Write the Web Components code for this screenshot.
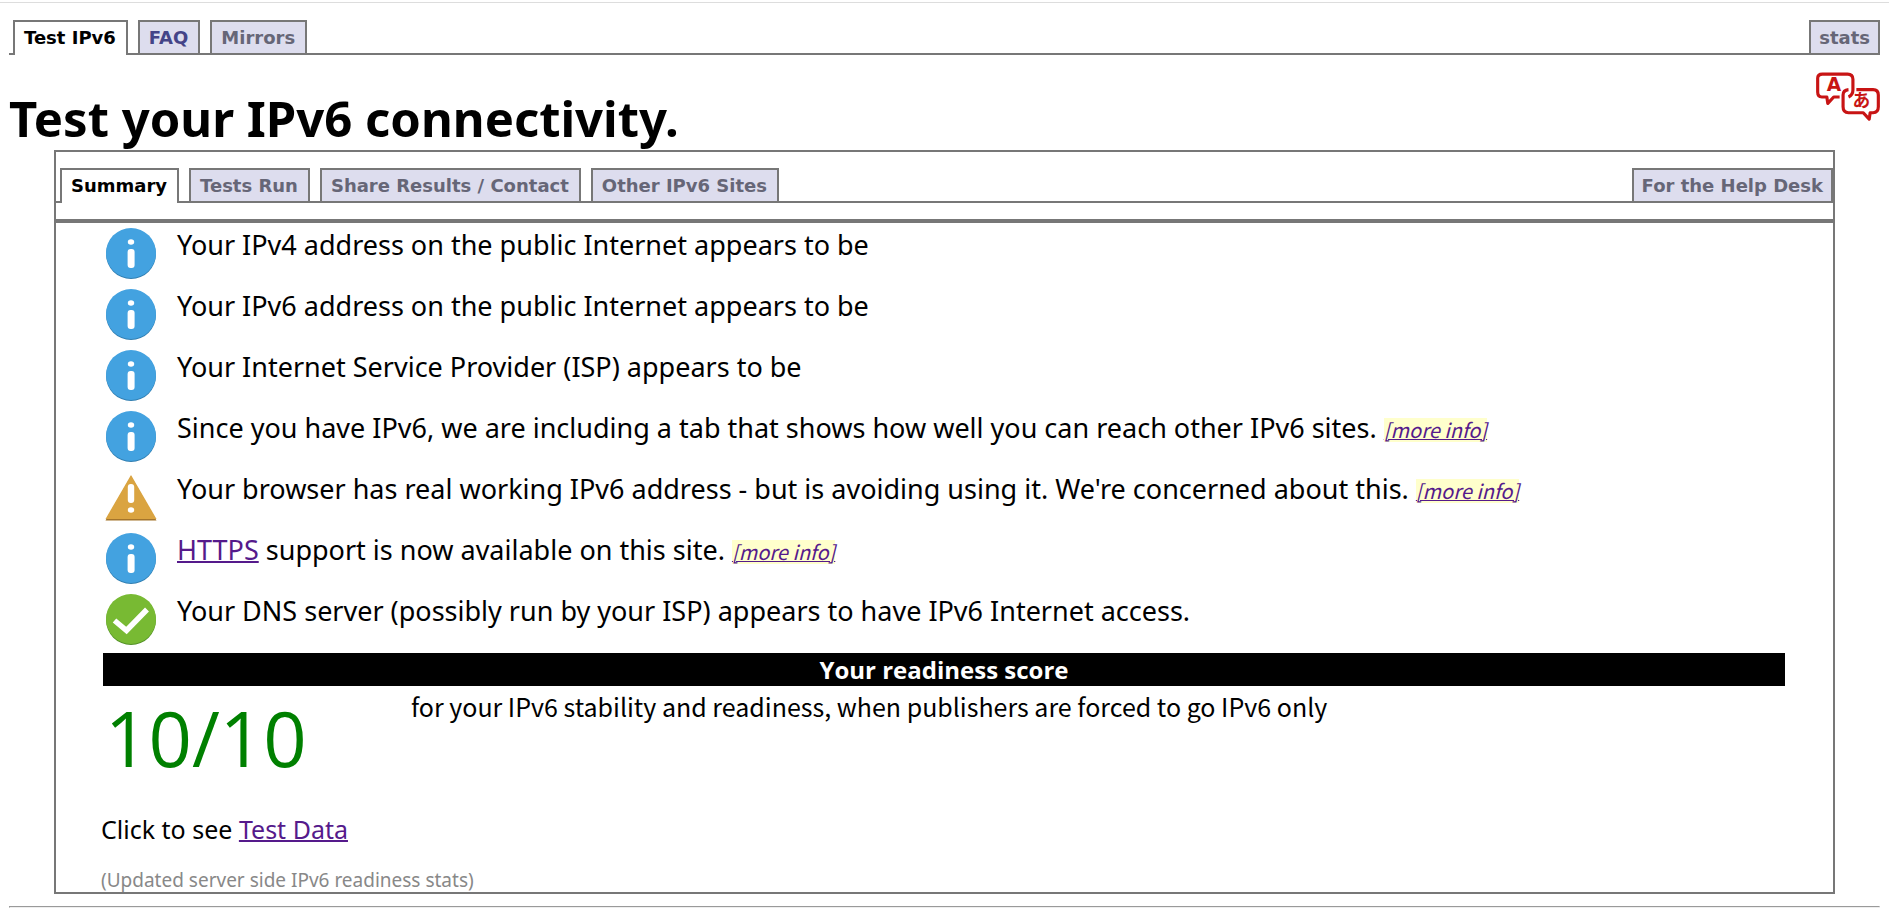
<!DOCTYPE html>
<html lang="en">
<head>
<meta charset="utf-8">
<title>Test your IPv6 connectivity.</title>
<style>
  body {
    margin: 0;
    background: #fff;
    color: #000;
    font-family: "Noto Sans", "Open Sans", sans-serif;
    font-size: 27px;
  }
</style>
</head>
<body>
<ipv6-page></ipv6-page>

<script>
  const define = (name, html) => {
    const template = document.createElement('template');
    template.innerHTML = html;
    customElements.define(name, class extends HTMLElement {
      constructor() {
        super();
        this.attachShadow({ mode: 'open' }).append(template.content.cloneNode(true));
      }
    });
  };

  // A row of tabs standing on a shared rule.
  define('tab-bar', `
    <style>
      :host { display: block; }
      nav { display: flex; gap: 10px; padding-left: 4px; border-bottom: 2px solid #777; }
    </style>
    <nav><slot></slot></nav>
  `);

  customElements.define('tab-item', class extends HTMLElement {
    connectedCallback() {
      if (this.shadowRoot) return;
      this.attachShadow({ mode: 'open' }).innerHTML = `
        <style>
          :host { display: block; }
          :host([end]) { margin-left: auto; }
          a {
            display: block; padding: 1px 10px 0 9px; border: 2px solid #777; border-bottom: 0;
            background: #dde; color: #667; text-decoration: none;
            font: bold 18px/30px "DejaVu Sans", Verdana, sans-serif;
          }
          :host([end]) a { padding-left: 8px; padding-right: 8px; }
          :host([visited]) a { color: #448; }
          :host([current]) a { background: #fff; color: #000; margin-bottom: -2px; padding-bottom: 2px; }
        </style>
        <a href="#"><slot></slot></a>`;
    }
  });

  const icons = {
    info: `
      <circle cx="26" cy="26" r="25" fill="#2f7db0"/>
      <circle cx="26" cy="25" r="25" fill="#43a2e0"/>
      <ellipse cx="26" cy="14" rx="3.2" ry="2.8" fill="#fff"/>
      <rect x="22.6" y="21" width="7" height="19" rx="3" fill="#fff"/>`,
    warn: `
      <path d="M26 4 51.5 48.5H.5Z" fill="#a3742b"/>
      <path d="M26 3 51.5 47H.5Z" fill="#daa441"/>
      <rect x="22.8" y="12" width="6.4" height="19" rx="3" fill="#fff"/>
      <ellipse cx="26" cy="38" rx="3.2" ry="2.8" fill="#fff"/>`,
    ok: `
      <circle cx="26" cy="26" r="25" fill="#518f25"/>
      <circle cx="26" cy="25" r="25" fill="#78ba33"/>
      <path d="M9.500 26.500 21.500 36.500 42 15.500" fill="none" stroke="#fff" stroke-width="5.500"/>`
  };

  customElements.define('result-row', class extends HTMLElement {
    connectedCallback() {
      if (this.shadowRoot) return;
      this.attachShadow({ mode: 'open' }).innerHTML = `
        <style>
          :host { display: flex; gap: 20px; height: 61px; padding-left: 2px; }
          svg { flex: none; width: 52px; height: 52px; margin-top: 5px; }
          p { margin: 3px 0 0; line-height: 38px; }
        </style>
        <svg viewBox="0 0 52 52" aria-hidden="true">${icons[this.getAttribute('kind')]}</svg>
        <p><slot></slot></p>`;
    }
  });

  define('more-info', `
    <style>
      a {
        color: #551a8b; background: #ffc; text-decoration-thickness: 1px;
        font: italic 20px/24px "Noto Sans CJK SC", sans-serif; display: inline-block;
      }
    </style>
    <a href="#">[more info]</a>
  `);

  define('text-link', `
    <style>a { color: #551a8b; text-decoration-thickness: 2px; }</style>
    <a href="#"><slot></slot></a>
  `);

  define('readiness-score', `
    <style>
      :host { display: block; padding-top: 3px; }
      h2 { margin: 0; background: #000; color: #fff; text-align: center; font: bold 24px/33px "Open Sans", sans-serif; }
      div { display: grid; grid-template-columns: 308px 1fr; }
      strong { color: #008000; padding-left: 2px; font: 76px/103px "Open Sans", sans-serif; }
      p { margin: 3px 0 0; font: 25px/34px "Noto Sans CJK SC", sans-serif; }
    </style>
    <h2>Your readiness score</h2>
    <div><strong>10/10</strong><p>for your IPv6 stability and readiness, when publishers are forced to go IPv6 only</p></div>
  `);

  define('language-button', `
    <style>
      :host { display: block; }
      button { display: block; padding: 0; border: 0; background: none; cursor: pointer; }
      svg { display: block; }
      text { fill: #c81414; font-weight: bold; }
    </style>
    <button type="button" aria-label="Language">
      <svg width="64" height="49" viewBox="0 0 65 49">
        <g fill="none" stroke="#c81414" stroke-width="3.2" stroke-linejoin="round">
          <path d="M24 25H18L12 31.500 11 25H6Q1.700 25 1.700 20V6Q1.700 1.700 6.500 1.700H32Q37.500 1.700 37.500 7V18Q37.500 23 33 25"/>
          <path d="M33 17.500Q27.500 18 27.500 23V35Q27.500 41 33 41H48L54 47.500 55 41H58Q63.300 41 63.300 35V23Q63.300 17.500 58 17.500H41"/>
        </g>
        <text x="11" y="19" font-size="19" font-family="DejaVu Sans, sans-serif">A</text>
        <text x="37" y="35" font-size="18" font-family="Noto Sans CJK JP, sans-serif">あ</text>
      </svg>
    </button>
  `);

  define('results-panel', `
    <style>
      :host { display: block; margin: 0 45px; border: 2px solid #777; }
      tab-bar { padding-top: 16px; }
      .tabs { padding-bottom: 16px; border-bottom: 4px solid #777; }
      .body { padding: 0 48px 0 47px; }
      .data { margin: 23px 0 0; font-size: 25px; line-height: 34px; }
      .stats { margin: 22px 0 0; color: #888; font-size: 19px; line-height: 24px; }
      .data, .stats { margin-left: -2px; }
    </style>
    <div class="tabs">
      <tab-bar>
        <tab-item current>Summary</tab-item>
        <tab-item>Tests Run</tab-item>
        <tab-item>Share Results / Contact</tab-item>
        <tab-item>Other IPv6 Sites</tab-item>
        <tab-item end>For the Help Desk</tab-item>
      </tab-bar>
    </div>
    <div class="body">
      <result-row kind="info">Your IPv4 address on the public Internet appears to be</result-row>
      <result-row kind="info">Your IPv6 address on the public Internet appears to be</result-row>
      <result-row kind="info">Your Internet Service Provider (ISP) appears to be</result-row>
      <result-row kind="info">Since you have IPv6, we are including a tab that shows how well you can reach other IPv6 sites. <more-info></more-info></result-row>
      <result-row kind="warn">Your browser has real working IPv6 address - but is avoiding using it. We're concerned about this. <more-info></more-info></result-row>
      <result-row kind="info"><text-link>HTTPS</text-link> support is now available on this site. <more-info></more-info></result-row>
      <result-row kind="ok">Your DNS server (possibly run by your ISP) appears to have IPv6 Internet access.</result-row>
      <readiness-score></readiness-score>
      <p class="data">Click to see <text-link>Test Data</text-link></p>
      <p class="stats">(Updated server side IPv6 readiness stats)</p>
    </div>
  `);

  define('ipv6-page', `
    <style>
      :host { display: block; padding: 2px 9px 0; }
      :host::before { content: ""; display: block; height: 1px; margin: 0 -9px 17px; background: #ddd; }
      header { display: flex; justify-content: space-between; align-items: flex-start; height: 95px; }
      h1 { margin: 31px 0 0; font: bold 49px/64px "Noto Sans", "Open Sans", sans-serif; }
      language-button { margin-top: 17px; }
      hr { margin: 12px 0 0; }
    </style>
    <tab-bar>
      <tab-item current>Test IPv6</tab-item>
      <tab-item visited>FAQ</tab-item>
      <tab-item>Mirrors</tab-item>
      <tab-item end>stats</tab-item>
    </tab-bar>
    <header>
      <h1>Test your IPv6 connectivity.</h1>
      <language-button></language-button>
    </header>
    <main><results-panel></results-panel></main>
    <hr>
  `);
</script>
</body>
</html>
